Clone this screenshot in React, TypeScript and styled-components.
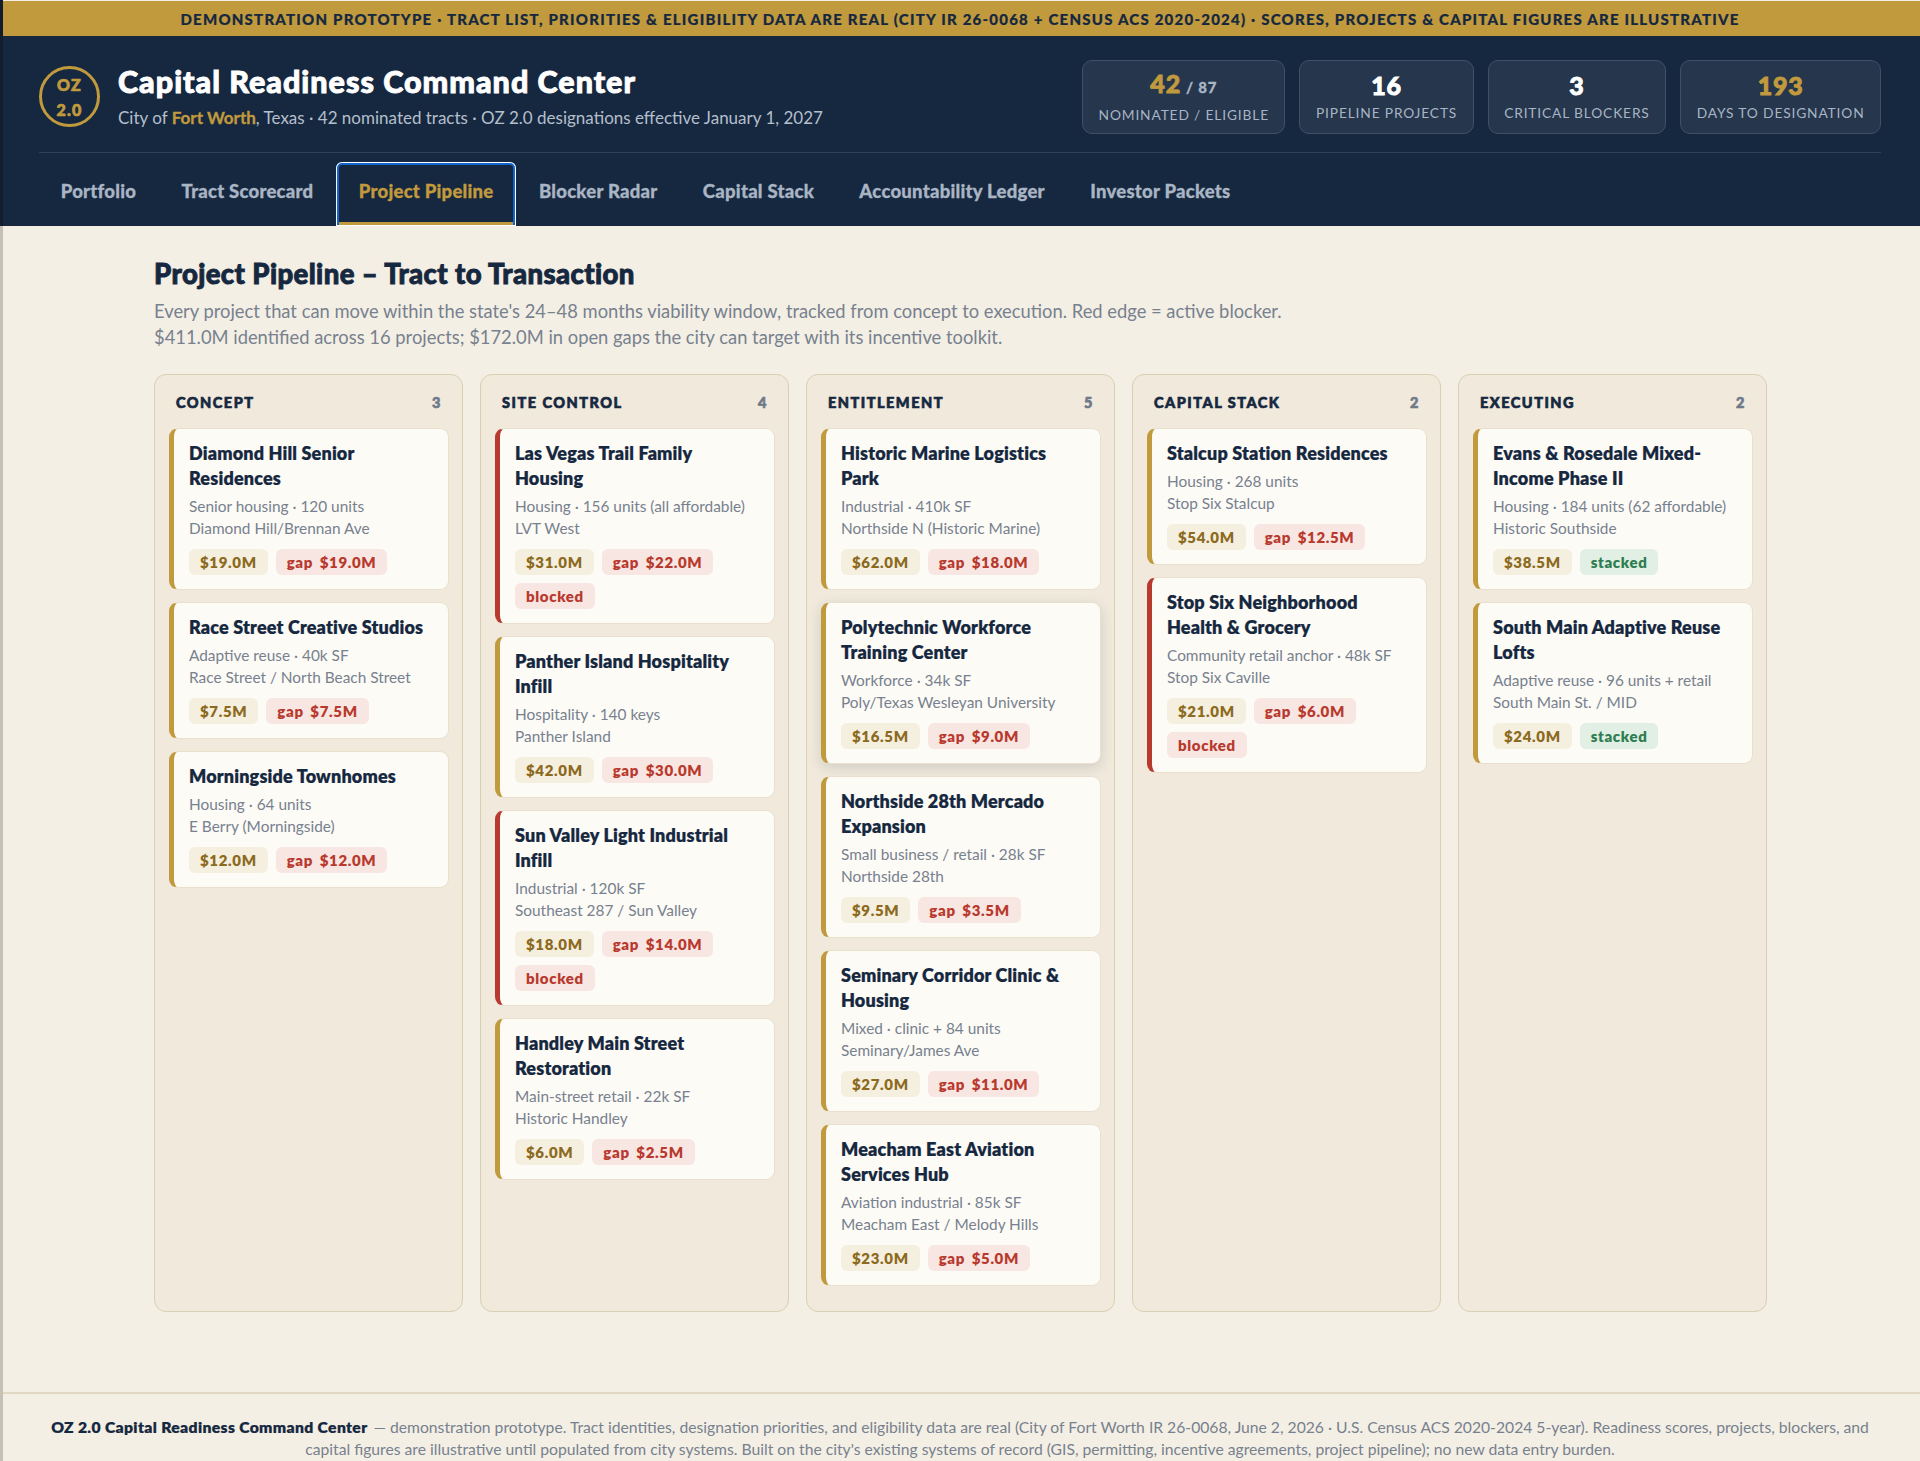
import React from 'react'
import styled, { createGlobalStyle, css } from 'styled-components'

const navy = '#16283f'
const gold = '#c19a3e'
const red = '#b83a2e'

// Lato Black is a bit thin next to the reference, so thicken it slightly
const heavy = (width: number) => css`
  font-weight: 900;
  -webkit-text-stroke: ${width}px currentColor;
`

const GlobalStyle = createGlobalStyle`
  html, body { margin: 0; padding: 0; background: #f4efe4; }
  body { font-family: Lato, "Noto Sans", sans-serif; color: ${navy}; }
  * { box-sizing: border-box; }
`

const Page = styled.div`
  position: relative;
  height: 1461px;
  overflow: hidden;
  display: flex;
  flex-direction: column;
  background: #f4efe4;

  /* thin window edge on the left of the capture */
  &::before {
    content: '';
    position: absolute;
    top: 0;
    bottom: 0;
    left: 0;
    width: 3px;
    background: linear-gradient(#121e2e 226px, #c4c1b7 226px);
  }
`

const Banner = styled.div`
  height: 35px;
  margin-top: 1px;
  display: flex;
  align-items: center;
  justify-content: center;
  background: ${gold};
  color: ${navy};
  font-size: 15px;
  letter-spacing: 1.22px;
  text-transform: uppercase;
  white-space: nowrap;
  ${heavy(0.2)}
`

const Header = styled.header`
  background: ${navy};
  padding: 0 39px;
`

const HeaderTop = styled.div`
  height: 117px;
  padding-top: 5px;
  display: flex;
  align-items: center;
  justify-content: space-between;
  border-bottom: 1px solid #2e4159;
`

const Brand = styled.div`
  display: flex;
  align-items: center;
  gap: 18px;
`

const Logo = styled.div`
  width: 61px;
  height: 61px;
  border: 3px solid ${gold};
  border-radius: 50%;
  display: flex;
  align-items: center;
  justify-content: center;
  text-align: center;
  color: ${gold};
  font-size: 16px;
  line-height: 25px;
  letter-spacing: 1.2px;
  ${heavy(0.7)}
`

const Title = styled.h1`
  margin: 0;
  color: #fff;
  font-size: 30.5px;
  line-height: 36px;
  letter-spacing: 1px;
  ${heavy(0.9)}
`

const Subtitle = styled.div`
  margin-top: 7px;
  color: #b4bfcc;
  font-size: 17px;
  line-height: 24px;

  strong {
    color: ${gold};
    font-weight: 700;
    -webkit-text-stroke: 0.3px currentColor;
  }
`

const Stats = styled.div`
  display: flex;
  gap: 14px;
`

const Stat = styled.div`
  height: 74px;
  padding: 0 15.5px;
  display: flex;
  flex-direction: column;
  align-items: center;
  justify-content: center;
  background: #25364d;
  border: 1px solid #3f5067;
  border-radius: 10px;
`

const StatValue = styled.div<{ $gold?: boolean }>`
  color: ${props => (props.$gold ? gold : '#fff')};
  font-size: 25px;
  line-height: 28px;
  letter-spacing: 0.8px;
  ${heavy(0.9)}

  small {
    color: #a9b5c4;
    font-size: 15px;
    margin-left: 5px;
    -webkit-text-stroke: 0.3px currentColor;
  }
`

const StatLabel = styled.div`
  margin-top: 5px;
  color: #a9b5c4;
  font-size: 13.75px;
  line-height: 18px;
  letter-spacing: 0.85px;
  text-transform: uppercase;
`

const Tabs = styled.nav`
  height: 73px;
  padding-top: 9px;
  margin-left: -1px;
  display: flex;
`

const activeTab = css`
  box-shadow: inset 0 0 0 1px #fff, inset 0 0 0 3px #1265cc;

  &::after {
    content: '';
    position: absolute;
    left: 3px;
    right: 3px;
    bottom: 1px;
    height: 3px;
    background: ${gold};
  }
`

const Tab = styled.div<{ $active?: boolean }>`
  position: relative;
  height: 64px;
  padding: 0 22.7px 7px;
  display: flex;
  align-items: center;
  color: ${props => (props.$active ? gold : '#a9b5c4')};
  font-size: 18.5px;
  letter-spacing: 0.25px;
  border-radius: 6px 6px 0 0;
  ${heavy(0.3)}
  ${props => props.$active && activeTab}
`

const Main = styled.main`
  padding: 30px 153px 0 154px;
`

const Heading = styled.h2`
  margin: 0;
  font-size: 27.5px;
  line-height: 36px;
  letter-spacing: 0.4px;
  ${heavy(0.9)}
`

const Lead = styled.p`
  margin: 6px 0 0;
  color: #77818f;
  font-size: 18.35px;
  line-height: 26px;
`

const Board = styled.div`
  margin-top: 24px;
  display: grid;
  grid-template-columns: repeat(5, 1fr);
  gap: 17px;
`

const Column = styled.section`
  height: 938px;
  padding: 14px 13px 14px 14px;
  background: #f0e9dc;
  border: 1px solid #d9cfb2;
  border-radius: 12px;
`

const ColumnHead = styled.div`
  height: 26px;
  margin-bottom: 13px;
  padding: 0 7px;
  display: flex;
  align-items: center;
  justify-content: space-between;
  font-size: 14.5px;
  letter-spacing: 1.5px;
  text-transform: uppercase;
  ${heavy(0.65)}

  span {
    color: #6f7a89;
  }
`

const Cards = styled.div`
  display: flex;
  flex-direction: column;
  gap: 12.5px;
`

const Card = styled.article<{ $blocked?: boolean; $raised?: boolean }>`
  padding: 12px 15px 14px 15px;
  background: #fdfbf6;
  border: 1px solid #e8e0cd;
  border-left: 5px solid ${props => (props.$blocked ? red : gold)};
  border-radius: 9px;
  box-shadow: ${props => (props.$raised ? '0 4px 14px rgba(22, 40, 63, 0.14)' : 'none')};
`

const CardTitle = styled.h3`
  margin: 0;
  font-size: 18px;
  line-height: 25px;
  font-weight: 800;
  letter-spacing: 0.16px;
  -webkit-text-stroke: 0.2px currentColor;
`

const Meta = styled.div`
  margin-top: 3.5px;
  color: #77818f;
  font-size: 15.4px;
  line-height: 22.5px;
`

const Tags = styled.div`
  margin-top: 9px;
  display: flex;
  flex-wrap: wrap;
  gap: 8px;
`

const Tag = styled.span<{ $kind: 'amount' | 'gap' | 'ok' }>`
  height: 26px;
  padding: 0 11px;
  display: inline-flex;
  align-items: center;
  border-radius: 6px;
  font-size: 15px;
  font-weight: 800;
  letter-spacing: 0.65px;
  word-spacing: 2.5px;
  background: ${props => ({ amount: '#f5efdf', gap: '#f8e6e2', ok: '#e1efe5' })[props.$kind]};
  color: ${props => ({ amount: '#8c6a1e', gap: red, ok: '#2e7d50' })[props.$kind]};
`

const Footer = styled.footer`
  margin-top: 80px;
  flex: 1;
  padding: 22px 50px 0;
  border-top: 2px solid #e0d8c2;
  text-align: center;
  color: #77818f;
  font-size: 15.7px;
  line-height: 22px;

  strong {
    color: ${navy};
    font-weight: 800;
    letter-spacing: 0.35px;
    margin-right: 2px;
    -webkit-text-stroke: 0.2px currentColor;
  }
`

type Project = {
  name: string
  kind: string
  place: string
  amount: string
  gap?: string
  blocked?: boolean
  stacked?: boolean
  raised?: boolean
}

const columns: { title: string; projects: Project[] }[] = [
  {
    title: 'Concept',
    projects: [
      { name: 'Diamond Hill Senior Residences', kind: 'Senior housing · 120 units', place: 'Diamond Hill/Brennan Ave', amount: '$19.0M', gap: '$19.0M' },
      { name: 'Race Street Creative Studios', kind: 'Adaptive reuse · 40k SF', place: 'Race Street / North Beach Street', amount: '$7.5M', gap: '$7.5M' },
      { name: 'Morningside Townhomes', kind: 'Housing · 64 units', place: 'E Berry (Morningside)', amount: '$12.0M', gap: '$12.0M' },
    ],
  },
  {
    title: 'Site Control',
    projects: [
      { name: 'Las Vegas Trail Family Housing', kind: 'Housing · 156 units (all affordable)', place: 'LVT West', amount: '$31.0M', gap: '$22.0M', blocked: true },
      { name: 'Panther Island Hospitality Infill', kind: 'Hospitality · 140 keys', place: 'Panther Island', amount: '$42.0M', gap: '$30.0M' },
      { name: 'Sun Valley Light Industrial Infill', kind: 'Industrial · 120k SF', place: 'Southeast 287 / Sun Valley', amount: '$18.0M', gap: '$14.0M', blocked: true },
      { name: 'Handley Main Street Restoration', kind: 'Main-street retail · 22k SF', place: 'Historic Handley', amount: '$6.0M', gap: '$2.5M' },
    ],
  },
  {
    title: 'Entitlement',
    projects: [
      { name: 'Historic Marine Logistics Park', kind: 'Industrial · 410k SF', place: 'Northside N (Historic Marine)', amount: '$62.0M', gap: '$18.0M' },
      { name: 'Polytechnic Workforce Training Center', kind: 'Workforce · 34k SF', place: 'Poly/Texas Wesleyan University', amount: '$16.5M', gap: '$9.0M', raised: true },
      { name: 'Northside 28th Mercado Expansion', kind: 'Small business / retail · 28k SF', place: 'Northside 28th', amount: '$9.5M', gap: '$3.5M' },
      { name: 'Seminary Corridor Clinic & Housing', kind: 'Mixed · clinic + 84 units', place: 'Seminary/James Ave', amount: '$27.0M', gap: '$11.0M' },
      { name: 'Meacham East Aviation Services Hub', kind: 'Aviation industrial · 85k SF', place: 'Meacham East / Melody Hills', amount: '$23.0M', gap: '$5.0M' },
    ],
  },
  {
    title: 'Capital Stack',
    projects: [
      { name: 'Stalcup Station Residences', kind: 'Housing · 268 units', place: 'Stop Six Stalcup', amount: '$54.0M', gap: '$12.5M' },
      { name: 'Stop Six Neighborhood Health & Grocery', kind: 'Community retail anchor · 48k SF', place: 'Stop Six Caville', amount: '$21.0M', gap: '$6.0M', blocked: true },
    ],
  },
  {
    title: 'Executing',
    projects: [
      { name: 'Evans & Rosedale Mixed-Income Phase II', kind: 'Housing · 184 units (62 affordable)', place: 'Historic Southside', amount: '$38.5M', stacked: true },
      { name: 'South Main Adaptive Reuse Lofts', kind: 'Adaptive reuse · 96 units + retail', place: 'South Main St. / MID', amount: '$24.0M', stacked: true },
    ],
  },
]

const tabs = ['Portfolio', 'Tract Scorecard', 'Project Pipeline', 'Blocker Radar', 'Capital Stack', 'Accountability Ledger', 'Investor Packets']

const App = () => {
  return (
    <Page>
      <GlobalStyle />
      <Banner>
        Demonstration prototype · Tract list, priorities &amp; eligibility data are real (City IR 26-0068 + Census ACS 2020-2024) · Scores, projects &amp; capital figures are illustrative
      </Banner>
      <Header>
        <HeaderTop>
          <Brand>
            <Logo>OZ<br />2.0</Logo>
            <div>
              <Title>Capital Readiness Command Center</Title>
              <Subtitle>City of <strong>Fort Worth</strong>, Texas · 42 nominated tracts · OZ 2.0 designations effective January 1, 2027</Subtitle>
            </div>
          </Brand>
          <Stats>
            <Stat>
              <StatValue $gold>42<small>/ 87</small></StatValue>
              <StatLabel>Nominated / Eligible</StatLabel>
            </Stat>
            <Stat>
              <StatValue>16</StatValue>
              <StatLabel>Pipeline Projects</StatLabel>
            </Stat>
            <Stat>
              <StatValue>3</StatValue>
              <StatLabel>Critical Blockers</StatLabel>
            </Stat>
            <Stat>
              <StatValue $gold>193</StatValue>
              <StatLabel>Days to Designation</StatLabel>
            </Stat>
          </Stats>
        </HeaderTop>
        <Tabs>
          {tabs.map(tab => (
            <Tab key={tab} $active={tab === 'Project Pipeline'}>{tab}</Tab>
          ))}
        </Tabs>
      </Header>
      <Main>
        <Heading>Project Pipeline – Tract to Transaction</Heading>
        <Lead>
          Every project that can move within the state's 24–48 months viability window, tracked from concept to execution. Red edge = active blocker.<br />
          $411.0M identified across 16 projects; $172.0M in open gaps the city can target with its incentive toolkit.
        </Lead>
        <Board>
          {columns.map(column => (
            <Column key={column.title}>
              <ColumnHead>
                {column.title}
                <span>{column.projects.length}</span>
              </ColumnHead>
              <Cards>
                {column.projects.map(project => (
                  <Card key={project.name} $blocked={project.blocked} $raised={project.raised}>
                    <CardTitle>{project.name}</CardTitle>
                    <Meta>{project.kind}<br />{project.place}</Meta>
                    <Tags>
                      <Tag $kind="amount">{project.amount}</Tag>
                      {project.gap && <Tag $kind="gap">gap {project.gap}</Tag>}
                      {project.stacked && <Tag $kind="ok">stacked</Tag>}
                      {project.blocked && <Tag $kind="gap">blocked</Tag>}
                    </Tags>
                  </Card>
                ))}
              </Cards>
            </Column>
          ))}
        </Board>
      </Main>
      <Footer>
        <strong>OZ 2.0 Capital Readiness Command Center</strong> — demonstration prototype. Tract identities, designation priorities, and eligibility data are real (City of Fort Worth IR 26-0068, June 2, 2026 · U.S. Census ACS 2020-2024 5-year). Readiness scores, projects, blockers, and capital figures are illustrative until populated from city systems. Built on the city's existing systems of record (GIS, permitting, incentive agreements, project pipeline); no new data entry burden.
      </Footer>
    </Page>
  )
}

export default App
